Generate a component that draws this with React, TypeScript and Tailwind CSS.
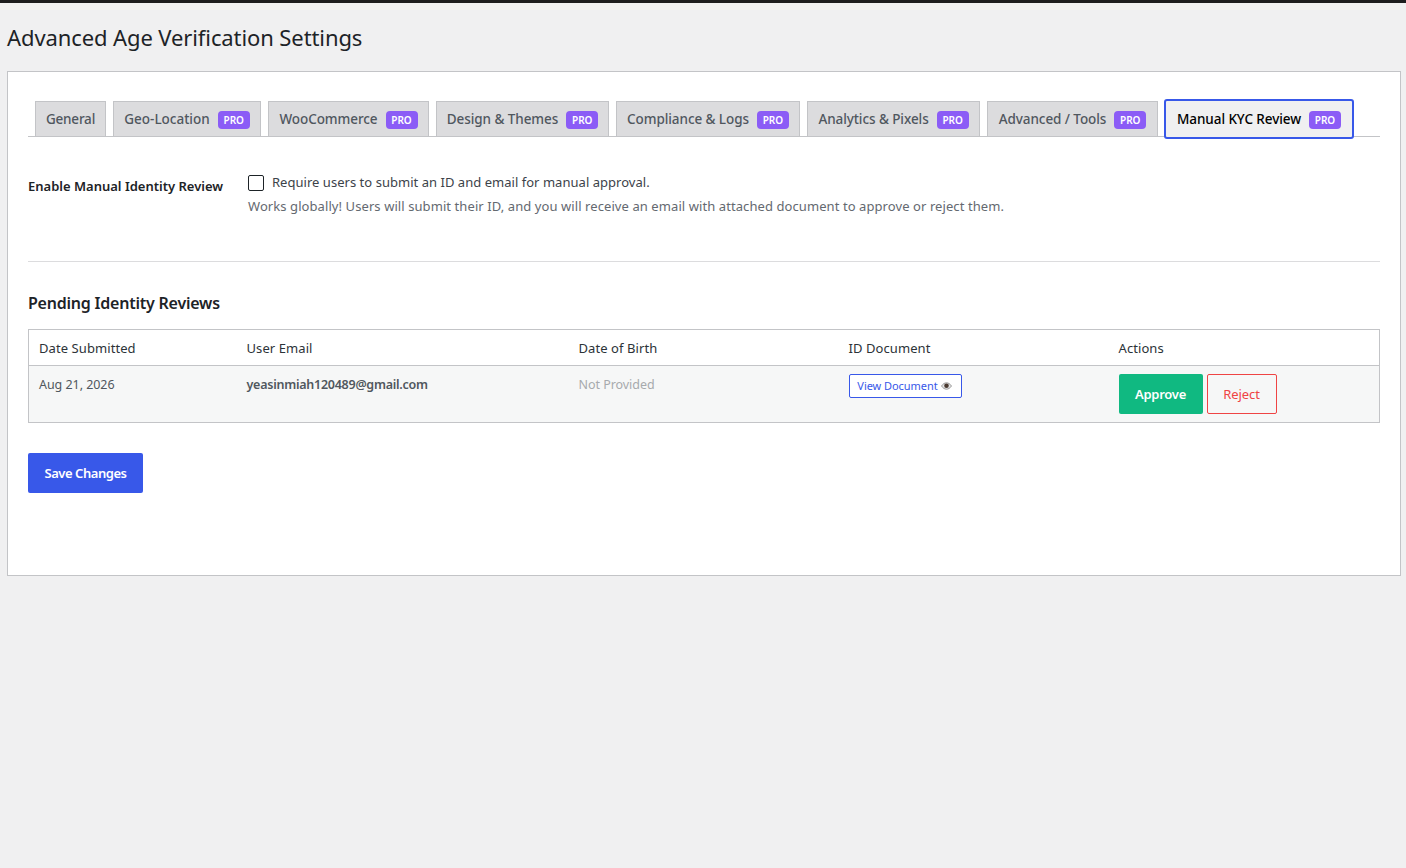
const tabs = [
  { label: "General", pro: false, width: "w-[71px]", tracking: "tracking-[-0.2px]" },
  { label: "Geo-Location", pro: true, width: "w-[148px]", tracking: "tracking-[0px]" },
  { label: "WooCommerce", pro: true, width: "w-[161px]", tracking: "tracking-[-0.08px]" },
  { label: "Design & Themes", pro: true, width: "w-[173px]", tracking: "tracking-[-0.07px]" },
  { label: "Compliance & Logs", pro: true, width: "w-[184px]", tracking: "tracking-[-0.08px]" },
  { label: "Analytics & Pixels", pro: true, width: "w-[173px]", tracking: "tracking-[-0.08px]" },
  { label: "Advanced / Tools", pro: true, width: "w-[171px]", tracking: "tracking-[-0.08px]" },
];

function ProBadge() {
  return (
    <span className="mt-[2px] ml-[8px] inline-flex h-[18px] w-[32px] shrink-0 items-center justify-center rounded-[4px] bg-[#8b5cf6] text-[10px] font-semibold tracking-normal text-white">
      PRO
    </span>
  );
}

function EyeIcon() {
  return (
    <svg width="11" height="8" viewBox="0 0 11 8" className="ml-[3px]">
      <path d="M0.5 4C2 1.8 3.7 0.8 5.5 0.8S9 1.8 10.5 4C9 6.2 7.3 7.2 5.5 7.2S2 6.2 0.5 4Z" fill="#e5e5e5" stroke="#777" strokeWidth="0.7" />
      <circle cx="5.5" cy="3.8" r="2.3" fill="#4a3a30" />
    </svg>
  );
}

export default function App() {
  return (
    <div className="min-h-[868px] border-t-[3px] border-[#1c1c1e] bg-[#f0f0f1] pr-[5px] pl-[7px] font-['Noto_Sans',sans-serif] text-[#3c434a]">
      <h1 className="pt-[18px] pb-[18px] text-[22px] leading-[32px] tracking-[-0.1px] text-[#1d2327]">
        Advanced Age Verification Settings
      </h1>

      <div className="h-[505px] border border-[#c3c4c7] bg-white px-[20px] pt-[29px]">
        <div className="flex h-[36px] gap-[7px] border-b border-[#c3c4c7] pl-[7px]">
          {tabs.map((tab) => (
            <div
              key={tab.label}
              className={`flex h-[36px] items-center justify-center border border-[#c3c4c7] bg-[#dcdcde] text-[13.5px] font-medium whitespace-nowrap text-[#50575e] ${tab.width} ${tab.tracking}`}
            >
              {tab.label}
              {tab.pro && <ProBadge />}
            </div>
          ))}
          <div className="relative -top-[2px] -ml-[1px] flex h-[40px] w-[190px] items-center justify-center rounded-[3px] border-2 border-[#3858e9] bg-[#f0f0f1] text-[13.5px] font-medium tracking-[-0.08px] whitespace-nowrap text-black">
            Manual KYC Review
            <ProBadge />
          </div>
        </div>

        <div className="flex h-[125px] border-b border-[#dcdcde] pt-[36px]">
          <div className="w-[220px] pt-[3px] text-[13px] leading-[20px] font-semibold whitespace-nowrap text-[#1d2327]">
            Enable Manual Identity Review
          </div>
          <div className="text-[13px]">
            <label className="flex h-[20px] items-center tracking-[0.03px]">
              <span className="mr-[8px] h-[16px] w-[16px] rounded-[2px] border border-[#1d2327] bg-white" />
              Require users to submit an ID and email for manual approval.
            </label>
            <p className="mt-[3px] text-[13px] leading-[20px] tracking-[0.08px] text-[#646970]">
              Works globally! Users will submit their ID, and you will receive an email with attached document to approve or reject them.
            </p>
          </div>
        </div>

        <h2 className="mt-[29px] text-[16px] leading-[24px] font-semibold tracking-[-0.22px] text-[#1d2327]">
          Pending Identity Reviews
        </h2>

        <table className="mt-[14px] w-full table-fixed border border-[#c3c4c7] text-left text-[13px] tracking-[0.08px]">
          <colgroup>
            <col className="w-[208px]" />
            <col className="w-[332px]" />
            <col className="w-[270px]" />
            <col className="w-[270px]" />
            <col />
          </colgroup>
          <thead>
            <tr className="h-[36px] border-b border-[#c3c4c7] bg-white text-[#2c3338]">
              <th className="pt-[2px] pl-[10px] font-normal">Date Submitted</th>
              <th className="pt-[2px] pl-[10px] font-normal">User Email</th>
              <th className="pt-[2px] pl-[10px] font-normal">Date of Birth</th>
              <th className="pt-[2px] pl-[10px] font-normal">ID Document</th>
              <th className="pt-[2px] pl-[10px] font-normal">Actions</th>
            </tr>
          </thead>
          <tbody>
            <tr className="h-[57px] bg-[#f6f7f7] align-top">
              <td className="pt-[9px] pl-[10px] text-[12.5px] leading-[20px] tracking-[-0.05px] text-[#50575e]">Aug 21, 2026</td>
              <td className="pt-[9px] pl-[10px] text-[12.5px] leading-[20px] font-semibold tracking-[-0.25px] text-[#50575e]">yeasinmiah120489@gmail.com</td>
              <td className="pt-[9px] pl-[10px] text-[12.5px] leading-[20px] tracking-[-0.05px] text-[#a7aaad]">Not Provided</td>
              <td className="pt-[8px] pl-[10px]">
                <span className="inline-flex h-[24px] w-[113px] items-center justify-center rounded-[2px] border border-[#3858e9] bg-white pr-[1px] text-[11px] tracking-[-0.05px] text-[#3858e9]">
                  View Document
                  <EyeIcon />
                </span>
              </td>
              <td className="pt-[8px] pl-[10px]">
                <div className="flex gap-[4px]">
                  <span className="flex h-[40px] w-[84px] items-center justify-center rounded-[2px] bg-[#10b981] pt-[1px] text-[13px] font-semibold tracking-[-0.25px] text-white">
                    Approve
                  </span>
                  <span className="flex h-[40px] w-[70px] items-center justify-center rounded-[2px] border border-[#ef4444] pt-[1px] text-[13px] tracking-[-0.05px] text-[#ef4444]">
                    Reject
                  </span>
                </div>
              </td>
            </tr>
          </tbody>
        </table>

        <button className="mt-[30px] flex h-[40px] w-[115px] items-center justify-center rounded-[2px] bg-[#3858e9] pt-[1px] text-[13px] font-semibold tracking-[-0.45px] text-white">
          Save Changes
        </button>
      </div>
    </div>
  );
}
